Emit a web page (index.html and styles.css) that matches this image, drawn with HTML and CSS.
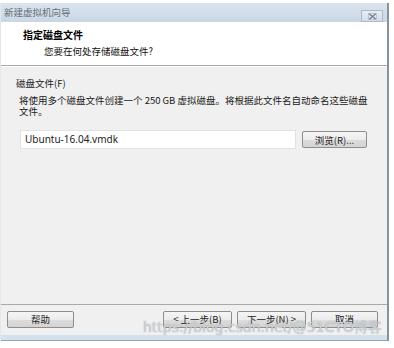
FILE: index.html
```html
<!DOCTYPE html>
<html>
<head>
<meta charset="utf-8">
<link rel="stylesheet" href="styles.css">
</head>
<body>
<div class="window">
  <div class="titlebar">
    <span class="title">新建虚拟机向导</span>
    <span class="close"><svg width="9" height="7" viewBox="0 0 9 7"><path d="M1 0.5 L8 6.5 M8 0.5 L1 6.5" stroke="#6f7f90" stroke-width="1.2"/><rect x="0.5" y="0.5" width="8" height="6" fill="none" stroke="#a8b4c0" stroke-width="0.6"/></svg></span>
  </div>
  <div class="header">
    <div class="h-title">指定磁盘文件</div>
    <div class="h-sub">您要在何处存储磁盘文件?</div>
  </div>
  <div class="content">
    <div class="label">磁盘文件(F)</div>
    <div class="desc">将使用多个磁盘文件创建一个 250 GB 虚拟磁盘。将根据此文件名自动命名这些磁盘文件。</div>
    <div class="row">
      <div class="input">Ubuntu-16.04.vmdk</div>
      <div class="btn browse">浏览(R)...</div>
    </div>
  </div>
  <div class="footer">
    <div class="btn help">帮助</div>
    <div class="spacer"></div>
    <div class="btn nav">&lt; 上一步(B)</div>
    <div class="btn nav">下一步(N) &gt;</div>
    <div class="btn cancel">取消</div>
    <div class="watermark">https://blog.csdn.net/@51CTO博客</div>
  </div>
  <div class="frame-bottom"></div>
</div>
</body>
</html>
```
FILE: styles.css
```css
html, body { margin: 0; padding: 0; background: #ffffff; }
body { width: 394px; height: 348px; overflow: hidden; font-family: "Noto Sans CJK SC", "Noto Sans", sans-serif; font-size: 9.5px; color: #1a1a1a; }
.window { width: 386px; margin-top: 3px; border-right: 2px solid #8a9299; border-left: 1px solid #e4e8ec; box-sizing: border-box; width: 389px; }
.titlebar { height: 19px; background: linear-gradient(#dbe5ef, #c8d6e5); display: flex; align-items: center; justify-content: space-between; padding: 0 3px 0 3px; position: relative; }
.title { color: #6a6f75; font-size: 9.5px; line-height: 19px; }
.close { width: 22px; height: 12px; margin-top: 7px; margin-right: 1px; border: 1px solid #aeb9c4; background: linear-gradient(#e6edf4, #d3dde8); display: flex; align-items: center; justify-content: center; box-sizing: border-box; }
.header { height: 44px; background: #ffffff; border-bottom: 1px solid #a9a9a9; box-sizing: border-box; padding-top: 7px; }
.h-title { font-weight: bold; font-size: 10px; margin-left: 22px; line-height: 12px; color: #000; }
.h-sub { margin-left: 43px; line-height: 12px; margin-top: 4px; color: #111; }
.content { height: 238px; background: #f0f0f0; padding: 10px 0 0 15px; box-sizing: border-box; border-top: 1px solid #ffffff; }
.label { line-height: 12px; }
.desc { margin-top: 6px; margin-left: 3px; width: 352px; line-height: 11px; }
.row { display: flex; margin-top: 13px; margin-left: 4px; align-items: center; }
.input { width: 276px; height: 19px; background: #fff; border: 1px solid #e2e2e2; box-sizing: border-box; font-family: "Noto Sans", sans-serif; font-size: 10px; line-height: 17px; padding-left: 4px; color: #222; }
.btn { height: 17px; border: 1px solid #8e8e8e; border-radius: 2px; background: linear-gradient(#f5f5f5 0%, #ececec 50%, #dcdcdc 51%, #d4d4d4 100%); box-sizing: border-box; display: flex; align-items: center; justify-content: center; font-size: 9.5px; color: #222; }
.browse { width: 65px; margin-left: 6px; }
.footer { height: 31px; background: #f0f0f0; border-top: 1px solid #a9a9a9; box-sizing: border-box; display: flex; align-items: center; padding: 0 6px 2px 6px; position: relative; }
.help { width: 67px; }
.spacer { flex: 1; }
.nav { width: 69px; margin-right: 5px; }
.cancel { width: 67px; margin-right: 3px; }
.watermark { position: absolute; left: 142px; top: 14px; font-family: "DejaVu Sans", sans-serif; font-size: 14px; color: rgba(225,230,235,0.75); text-shadow: 0 0 1px #8a8f95; letter-spacing: 0px; white-space: nowrap; }
.frame-bottom { height: 5px; background: #d2e1ee; border-bottom: 1px solid #9aa5b0; }
```
